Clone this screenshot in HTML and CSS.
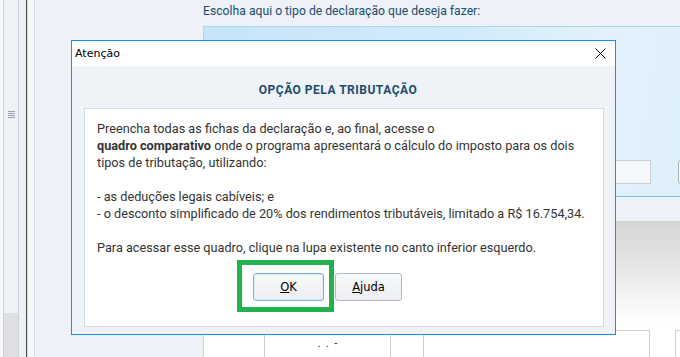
FILE: index.html
```html
<!DOCTYPE html>
<html lang="pt-BR">
<head>
    <meta charset="UTF-8">
    <title>Atenção</title>
    <link rel="stylesheet" href="styles.css">
</head>
<body>
<div class="app">
    <aside class="side">
        <div class="rail">
            <div class="rail-top"><span class="grip"></span></div>
            <div class="rail-bottom"></div>
        </div>
        <div class="gutter"></div>
        <div class="split"></div>
    </aside>
    <main class="main">
        <p class="intro">Escolha aqui o tipo de declaração que deseja fazer:</p>
        <section class="card card-blue">
            <div class="fields fields-blue">
                <span class="field field-wide"></span>
                <span class="field field-btn"></span>
            </div>
        </section>
        <section class="card card-grey">
            <div class="fields fields-grey">
                <span class="field field-cpf">.&nbsp;&nbsp;.&nbsp;&nbsp;-</span>
                <span class="field field-name"></span>
                <span class="field field-more"></span>
            </div>
        </section>
    </main>
</div>

<!-- janela de aviso -->
<div class="dialog">
    <div class="dialog-title">
        <span>Atenção</span>
        <svg class="close" width="11" height="11" viewBox="0 0 11 11">
            <path d="M0.5 0.5 L10.5 10.5 M10.5 0.5 L0.5 10.5" stroke="#000" stroke-width="1" fill="none"/>
        </svg>
    </div>
    <div class="dialog-body">
        <h1 class="dialog-head">OPÇÃO PELA TRIBUTAÇÃO</h1>
        <div class="msg">
            <p>Preencha todas as fichas da declaração e, ao final, acesse o<br>
                <b>quadro comparativo</b> onde o programa apresentará o cálculo do imposto para os dois<br>
                tipos de tributação, utilizando:</p>
            <p>- as deduções legais cabíveis; e<br>
                - o desconto simplificado de 20% dos rendimentos tributáveis, limitado a R$ 16.754,34.</p>
            <p>Para acessar esse quadro, clique na lupa existente no canto inferior esquerdo.</p>
            <div class="actions">
                <span class="mark"><button class="btn btn-ok"><u>O</u>K</button></span>
                <button class="btn btn-help"><u>A</u>juda</button>
            </div>
        </div>
    </div>
</div>
</body>
</html>
```

FILE: styles.css
```css
* {
    padding: 0;
    margin: 0;
    box-sizing: border-box;
}
html,body {
    height: 100%;
    overflow: hidden;
}
body {
    background: #eef2f8;
    font-family: Roboto, "Liberation Sans", sans-serif;
    position: relative;
}
.app {
    display: flex;
    height: 100%;
}

/* barra lateral */
.side {
    display: flex;
    width: 36px;
    padding-left: 3px;
    background: #f5f6f8;
}
.rail {
    width: 16px;
    display: flex;
    flex-direction: column;
    border-left: 1px solid #cbd3dd;
    border-right: 1px solid #cbd3dd;
}
.rail-top {
    flex: 1;
    background: #eef1f6;
    padding: 111px 0 0 4px;
}
.grip {
    display: block;
    width: 7px;
    height: 7px;
    background: repeating-linear-gradient(to bottom, #9aa3ad 0, #9aa3ad 1px, transparent 1px, transparent 2px);
}
.rail-bottom {
    height: 44px;
    background-color: #e6e8ea;
    background-image: radial-gradient(#d2d4d7 0.6px, transparent 0.8px);
    background-size: 2px 2px;
}
.gutter {
    width: 8px;
    background: #eff0f2;
    border-right: 1px solid #4b4b4b;
}
.split {
    width: 8px;
    background: #f6f7f9;
    border-left: 1px solid #dcdcdc;
    border-right: 1px solid #d8dce2;
}

/* conteudo principal */
.main {
    flex: 1;
    padding-left: 167px;
    overflow: hidden;
}
.intro {
    height: 26px;
    line-height: 22px;
    font-size: 12.2px;
    color: #1d4d6c;
    white-space: nowrap;
}
.card {
    width: 560px;
}
.card-blue {
    height: 171px;
    border: 1px solid #a6d6f3;
    border-bottom-color: #6ec0f2;
    background: linear-gradient(100deg, #c6e5f8 0%, #d2ebfa 45%, #e3f2fc 70%, #d9eefb 100%);
}
.card-grey {
    margin-top: 24px;
    height: 200px;
    border: 1px solid #cfd4da;
    background: linear-gradient(to bottom, #d6d6d6 0, #e4e4e4 40px, #f6f6f6 80px, #fff 100px);
}
.fields {
    display: flex;
}
.fields-blue {
    padding: 133px 0 0 246px;
    gap: 27px;
}
.fields-grey {
    padding: 108px 0 0 60px;
    gap: 32px;
}
.field {
    display: block;
    height: 24px;
    background: #fff;
    border: 1px solid #cfcfcf;
}
.field-wide {
    width: 201px;
    background: #f3f9fd;
}
.field-btn {
    width: 80px;
    border-color: #a9b0b8;
    border-radius: 3px;
    background: #f4f6f8;
}
.field-cpf {
    width: 127px;
    height: 30px;
    font-size: 11px;
    text-align: center;
    line-height: 26px;
    color: #222;
}
.field-name {
    width: 227px;
    height: 30px;
}
.field-more {
    width: 60px;
    height: 30px;
    margin-left: -7px;
}

/* dialogo */
.dialog {
    position: absolute;
    left: 71px;
    top: 40px;
    width: 545px;
    height: 295px;
    border: 1px solid #1a8ee8;
    display: flex;
    flex-direction: column;
    background: #eff2f7;
}
.dialog-title {
    height: 25px;
    background: #fff;
    display: flex;
    align-items: center;
    justify-content: space-between;
    padding: 0 9px 0 3px;
    font-family: "DejaVu Sans", sans-serif;
    font-size: 11px;
    color: #000;
}
.dialog-body {
    flex: 1;
    display: flex;
    flex-direction: column;
    padding: 0 11px 7px 12px;
}
.dialog-head {
    padding: 16px 12px 10px 0;
    line-height: 16px;
    font-size: 12px;
    font-weight: bold;
    text-align: center;
    color: #1c4d6d;
    letter-spacing: 0.5px;
}
.msg {
    flex: 1;
    background: #fff;
    border: 1px solid #d3dbe4;
    padding: 11px 12px 0 12px;
    font-size: 12.7px;
    line-height: 17px;
    color: #333;
}
.msg p {
    margin-bottom: 17px;
    white-space: nowrap;
}
.msg p:nth-child(3) {
    margin-bottom: 4px;
}
.actions {
    display: flex;
    align-items: flex-start;
    padding-left: 140px;
}
.mark {
    display: block;
    border: 5px solid #22b14c;
    padding: 8px 5px 6px 11px;
}
.btn {
    display: block;
    height: 28px;
    border-radius: 3px;
    font-family: "DejaVu Sans", sans-serif;
    font-size: 11.5px;
    color: #000;
    background: linear-gradient(#f8f9fa, #eceef1);
}
.btn-ok {
    width: 71px;
    border: 1px solid #7db5e8;
    box-shadow: inset 0 0 0 1px #d9ebfa;
}
.btn-help {
    width: 67px;
    margin: 13px 0 0 1px;
    border: 1px solid #b4b9c0;
}
```
